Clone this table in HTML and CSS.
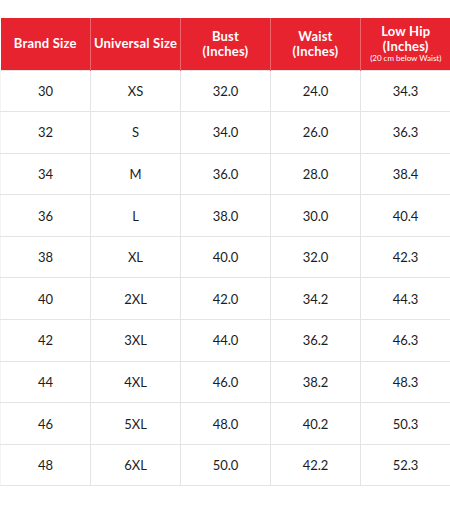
FILE: index.html
```html
<!DOCTYPE html>
<html>
<head>
<meta charset="utf-8">
<link rel="stylesheet" href="styles.css">
</head>
<body>
<table class="size-table">
  <thead>
    <tr>
      <th>Brand Size</th>
      <th>Universal Size</th>
      <th>Bust<br>(Inches)</th>
      <th>Waist<br>(Inches)</th>
      <th>Low Hip<br>(Inches)<span class="note">(20 cm below Waist)</span></th>
    </tr>
  </thead>
  <tbody>
    <tr><td>30</td><td>XS</td><td>32.0</td><td>24.0</td><td>34.3</td></tr>
    <tr><td>32</td><td>S</td><td>34.0</td><td>26.0</td><td>36.3</td></tr>
    <tr><td>34</td><td>M</td><td>36.0</td><td>28.0</td><td>38.4</td></tr>
    <tr><td>36</td><td>L</td><td>38.0</td><td>30.0</td><td>40.4</td></tr>
    <tr><td>38</td><td>XL</td><td>40.0</td><td>32.0</td><td>42.3</td></tr>
    <tr><td>40</td><td>2XL</td><td>42.0</td><td>34.2</td><td>44.3</td></tr>
    <tr><td>42</td><td>3XL</td><td>44.0</td><td>36.2</td><td>46.3</td></tr>
    <tr><td>44</td><td>4XL</td><td>46.0</td><td>38.2</td><td>48.3</td></tr>
    <tr><td>46</td><td>5XL</td><td>48.0</td><td>40.2</td><td>50.3</td></tr>
    <tr><td>48</td><td>6XL</td><td>50.0</td><td>42.2</td><td>52.3</td></tr>
  </tbody>
</table>
</body>
</html>
```
FILE: styles.css
```css
html, body {
  margin: 0;
  padding: 0;
  background: #ffffff;
}
body {
  padding-top: 18px;
  font-family: "Lato", "Noto Sans", sans-serif;
}
.size-table {
  width: 450px;
  border-collapse: collapse;
  table-layout: fixed;
}
.size-table th {
  background: #e6232f;
  color: #ffffff;
  font-weight: 700;
  font-size: 13px;
  line-height: 15px;
  letter-spacing: 0.2px;
  height: 52px;
  padding: 0;
  text-align: center;
  vertical-align: middle;
  border-left: 1px solid #f0646c;
  box-sizing: border-box;
  width: 90px;
}
.size-table th:first-child {
  border-left: none;
}
.size-table .note {
  display: block;
  font-size: 8px;
  font-weight: 400;
  line-height: 9px;
  letter-spacing: 0;
}
.size-table td {
  height: 41.6px;
  padding: 0;
  text-align: center;
  vertical-align: middle;
  font-size: 13px;
  color: #1c1c1c;
  border: 1px solid #e4e4e4;
  box-sizing: border-box;
}
.size-table td:first-child {
  border-left: 1px solid #f4f4f4;
}
.size-table td:last-child {
  border-right: 1px solid #f4f4f4;
}
```
